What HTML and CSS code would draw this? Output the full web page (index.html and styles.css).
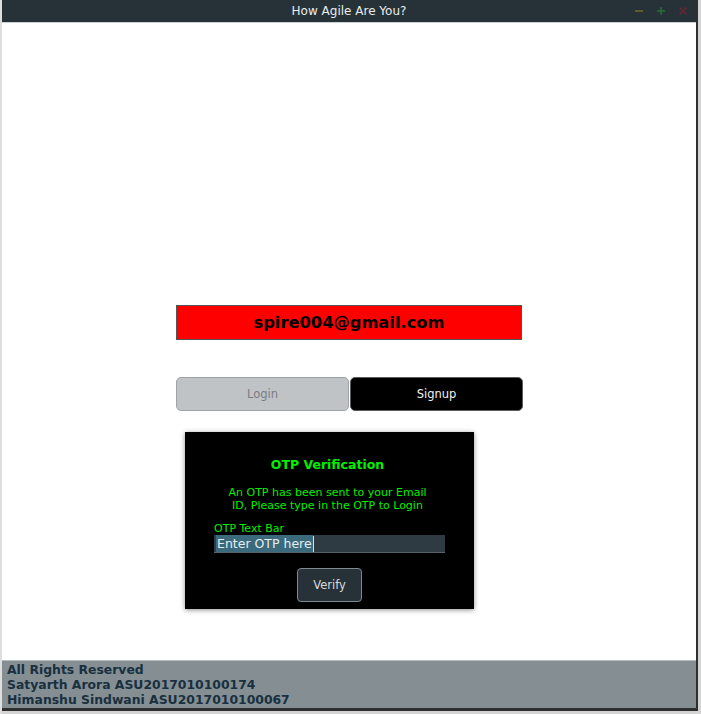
FILE: index.html
```html
<!DOCTYPE html>
<html>
<head>
<meta charset="utf-8">
<link rel="stylesheet" href="styles.css">
</head>
<body>
<div class="screen">
  <div class="edge-left"></div>
  <div class="window">
    <div class="titlebar">
      <span class="title">How Agile Are You?</span>
      <div class="controls">
        <svg class="ctl" width="10" height="10" viewBox="0 0 10 10"><path d="M1 5H9" stroke="#6e6630" stroke-width="1.6"/></svg>
        <svg class="ctl" width="10" height="10" viewBox="0 0 10 10"><path d="M1 5H9M5 1V9" stroke="#2a6c36" stroke-width="1.6"/></svg>
        <svg class="ctl" width="10" height="10" viewBox="0 0 10 10"><path d="M1.5 1.5L8.5 8.5M8.5 1.5L1.5 8.5" stroke="#6c2432" stroke-width="1.6"/></svg>
      </div>
    </div>
    <main class="content">
      <div class="email">spire004@gmail.com</div>
      <div class="tabs">
        <button class="tab tab-login">Login</button>
        <button class="tab tab-signup">Signup</button>
      </div>
      <div class="otp">
        <div class="otp-title">OTP Verification</div>
        <div class="otp-text">An OTP has been sent to your Email<br>ID, Please type in the OTP to Login</div>
        <div class="field">
          <div class="field-label">OTP Text Bar</div>
          <div class="field-input"><span class="sel">Enter OTP here</span><span class="caret"></span></div>
        </div>
        <button class="verify">Verify</button>
      </div>
    </main>
    <footer class="footer">
      <div>All Rights Reserved</div>
      <div>Satyarth Arora ASU2017010100174</div>
      <div>Himanshu Sindwani ASU2017010100067</div>
    </footer>
    <div class="bottom-line"></div>
    <div class="bottom-edge"></div>
  </div>
  <div class="edge-dark"></div>
  <div class="edge-right"></div>
</div>
</body>
</html>
```
FILE: styles.css
```css
html, body {
  margin: 0;
  padding: 0;
  background: #d6d6d6;
}
.screen {
  width: 701px;
  height: 714px;
  display: flex;
  font-family: "DejaVu Sans", Verdana, sans-serif;
  overflow: hidden;
}
.edge-left {
  width: 2px;
  background: #dedede;
}
.edge-dark {
  width: 2px;
  height: 711px;
  background: #2e2e2e;
}
.edge-right {
  width: 3px;
  background: #d4d4d4;
}
.window {
  width: 694px;
  display: flex;
  flex-direction: column;
}
.titlebar {
  height: 22px;
  background: #263238;
  border-bottom: 1px solid #c9d3d7;
  position: relative;
  display: flex;
  align-items: center;
  justify-content: center;
}
.title {
  color: #e8ecee;
  font-size: 12px;
}
.controls {
  position: absolute;
  right: 8px;
  top: 6px;
  display: flex;
  gap: 12px;
}
.ctl {
  display: block;
}
.content {
  flex: 1;
  background: #ffffff;
  display: flex;
  flex-direction: column;
  align-items: flex-start;
  padding-top: 282px;
}
.email {
  margin-left: 174px;
  width: 344px;
  height: 33px;
  background: #ff0000;
  border: 1px solid #555;
  color: #000;
  font-weight: bold;
  font-size: 16.3px;
  display: flex;
  align-items: center;
  justify-content: center;
}
.tabs {
  margin-top: 37px;
  margin-left: 174px;
  display: flex;
  gap: 1px;
}
.tab {
  width: 173px;
  height: 34px;
  border-radius: 5px;
  font-family: "DejaVu Sans", Verdana, sans-serif;
  font-size: 11.5px;
  padding: 0;
}
.tab-login {
  background: #c0c3c6;
  border: 1px solid #9ea3a7;
  color: #787c80;
}
.tab-signup {
  background: #000;
  border: 1px solid #5c5c5c;
  color: #f2f2f2;
}
.otp {
  margin-top: 21px;
  margin-left: 183px;
  width: 289px;
  height: 177px;
  box-sizing: border-box;
  background: #000;
  box-shadow: 0 1px 5px rgba(0, 0, 0, 0.45);
  display: flex;
  flex-direction: column;
  align-items: center;
  padding: 25px 4px 0 0;
  color: #00f000;
}
.otp-title {
  font-weight: bold;
  font-size: 12.5px;
  line-height: 16px;
}
.otp-text {
  margin-top: 13px;
  font-size: 11px;
  line-height: 13px;
  text-align: center;
}
.field {
  margin-top: 10px;
  width: 231px;
  margin-left: 4px;
}
.field-label {
  font-size: 11px;
  line-height: 13px;
}
.field-input {
  height: 17px;
  background: #2e3b42;
  border-bottom: 1px solid #56636a;
  display: flex;
  align-items: center;
  padding-left: 2px;
}
.sel {
  background: #3c6a7d;
  color: #e4eef0;
  font-size: 12.5px;
  line-height: 17px;
  padding: 0 1px;
}
.caret {
  width: 1px;
  height: 16px;
  background: #cfe3ea;
}
.verify {
  margin-top: 15px;
  margin-left: 4px;
  width: 65px;
  height: 34px;
  background: #263238;
  border: 1px solid #7f8a8f;
  border-radius: 4px;
  color: #d8dcde;
  font-family: "DejaVu Sans", Verdana, sans-serif;
  font-size: 11.5px;
  padding: 0;
}
.footer {
  height: 48px;
  box-sizing: border-box;
  background: #858e92;
  border-top: 1px solid #b5bbbe;
  padding: 1px 0 0 5px;
  color: #183040;
  font-weight: bold;
  font-size: 12.4px;
  line-height: 15px;
}
.bottom-line {
  height: 3px;
  background: #2e2e2e;
}
.bottom-edge {
  height: 3px;
  background: #d4d4d4;
}
```
